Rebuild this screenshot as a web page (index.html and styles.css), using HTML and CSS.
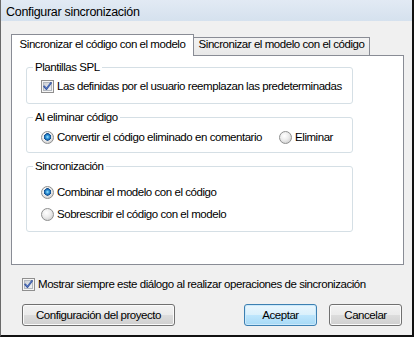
FILE: index.html
```html
<!DOCTYPE html>
<html lang="es">
<head>
<meta charset="utf-8">
<title>Configurar sincronización</title>
<link rel="stylesheet" href="styles.css">
</head>
<body>
<div class="window">
  <div class="titlebar">Configurar sincronización</div>
  <div class="body">
    <div class="tabs">
      <div class="tab tab-active">Sincronizar el código con el modelo</div>
      <div class="tab tab-inactive">Sincronizar el modelo con el código</div>
    </div>
    <div class="panel">
      <fieldset class="group">
        <legend>Plantillas SPL</legend>
        <div class="rows rows-1">
          <label class="opt">
            <svg class="cb" width="13" height="13" viewBox="0 0 13 13"><defs><linearGradient id="cbg1" x1="0" y1="0" x2="1" y2="1"><stop offset="0" stop-color="#c9cdd3"/><stop offset="1" stop-color="#f4f5f6"/></linearGradient></defs><rect x="0.5" y="0.5" width="12" height="12" fill="#f5f5f5" stroke="#8f8f8f"/><rect x="2.5" y="2.5" width="8" height="8" fill="url(#cbg1)" stroke="#b3b8bf"/><path d="M3.2 6.4 L5.4 9 L9.9 3" fill="none" stroke="#2f4f9c" stroke-width="1.9" stroke-linecap="round" stroke-linejoin="round"/><path d="M3.6 6.6 L5.4 8.5 L9.6 3.4" fill="none" stroke="#6f8fd8" stroke-width="0.7"/></svg>
            <span>Las definidas por el usuario reemplazan las predeterminadas</span>
          </label>
        </div>
      </fieldset>
      <fieldset class="group">
        <legend>Al eliminar código</legend>
        <div class="rows rows-2">
          <label class="opt"><span class="radio on"></span><span>Convertir el código eliminado en comentario</span></label>
          <label class="opt opt-right"><span class="radio"></span><span>Eliminar</span></label>
        </div>
      </fieldset>
      <fieldset class="group">
        <legend>Sincronización</legend>
        <div class="rows rows-3">
          <label class="opt"><span class="radio on"></span><span>Combinar el modelo con el código</span></label>
          <label class="opt"><span class="radio"></span><span>Sobrescribir el código con el modelo</span></label>
        </div>
      </fieldset>
    </div>
    <label class="opt footer-check">
      <svg class="cb" width="13" height="13" viewBox="0 0 13 13"><defs><linearGradient id="cbg2" x1="0" y1="0" x2="1" y2="1"><stop offset="0" stop-color="#c9cdd3"/><stop offset="1" stop-color="#f4f5f6"/></linearGradient></defs><rect x="0.5" y="0.5" width="12" height="12" fill="#f5f5f5" stroke="#8f8f8f"/><rect x="2.5" y="2.5" width="8" height="8" fill="url(#cbg2)" stroke="#b3b8bf"/><path d="M3.2 6.4 L5.4 9 L9.9 3" fill="none" stroke="#2f4f9c" stroke-width="1.9" stroke-linecap="round" stroke-linejoin="round"/><path d="M3.6 6.6 L5.4 8.5 L9.6 3.4" fill="none" stroke="#6f8fd8" stroke-width="0.7"/></svg>
      <span>Mostrar siempre este diálogo al realizar operaciones de sincronización</span>
    </label>
    <div class="buttons">
      <button class="btn btn-config">Configuración del proyecto</button>
      <button class="btn btn-default">Aceptar</button>
      <button class="btn btn-cancel">Cancelar</button>
    </div>
  </div>
</div>
</body>
</html>
```
FILE: styles.css
```css
* { box-sizing: border-box; }
html, body { margin: 0; padding: 0; }
body {
  width: 414px;
  height: 337px;
  overflow: hidden;
  font-family: "Liberation Sans", Arial, sans-serif;
  font-size: 11.5px;
  letter-spacing: -0.45px;
  color: #000;
  background: #f0f0f0;
}
.window {
  width: 414px;
  height: 337px;
  border-left: 1px solid #6a6a6a;
  border-right: 2px solid #111;
  border-bottom: 2px solid #111;
  background: #f0f0f0;
  display: flex;
  flex-direction: column;
}
.titlebar {
  height: 21px;
  padding: 5px 0 0 5px;
  line-height: 14px;
  font-size: 12.5px;
  letter-spacing: -0.3px;
  background: linear-gradient(#e2eaf4, #d5e1ee);
}
.body {
  padding: 13px 8px 0 10px;
  display: flex;
  flex-direction: column;
}
.tabs {
  display: flex;
  align-items: flex-end;
  height: 21px;
}
.tab {
  text-align: center;
  line-height: 13px;
  border: 1px solid #898c95;
  border-bottom: none;
  white-space: nowrap;
}
.tab-active {
  width: 183px;
  height: 22px;
  margin-bottom: -1px;
  padding-top: 3px;
  background: #fff;
  position: relative;
  z-index: 1;
}
.tab-inactive {
  width: 176px;
  height: 18px;
  border-left: none;
  background: linear-gradient(#f3f3f3, #e8e8e8);
}
.panel {
  width: 393px;
  height: 210px;
  border: 1px solid #898c95;
  background: #fff;
  padding: 4px 0 0 14px;
  display: flex;
  flex-direction: column;
  gap: 6px;
}
.group {
  width: 327px;
  margin: 0;
  padding: 0;
  border: 1px solid #d5dfe5;
  border-radius: 3px;
  min-width: 0;
}
.group legend {
  margin-left: 6px;
  padding: 0 2px;
  line-height: 15px;
}
.rows {
  display: flex;
  padding-left: 14px;
}
.rows-1 { padding-top: 3px; padding-bottom: 9px; }
.rows-2 { padding-top: 4px; padding-bottom: 7px; padding-right: 19px; }
.rows-3 { padding-top: 10px; padding-bottom: 9px; flex-direction: column; gap: 6px; }
.opt {
  display: flex;
  align-items: center;
  height: 16px;
  gap: 3px;
  white-space: nowrap;
}
.opt-right { margin-left: auto; }
.cb { flex: none; display: block; }
.radio {
  flex: none;
  width: 13px;
  height: 13px;
  border-radius: 50%;
  border: 1px solid #8e8f8f;
  background: radial-gradient(circle at 40% 35%, #ffffff 0, #ececec 45%, #d2d2d2 80%, #c4c4c4 100%);
}
.radio.on {
  background:
    radial-gradient(circle at 50% 45%, #a9e6ff 0, #3fa4e0 1.4px, #1d6fb8 2.6px, #134a86 3.5px, rgba(19,74,134,0) 3.9px),
    radial-gradient(circle at 40% 35%, #ffffff 0, #ececec 45%, #d2d2d2 80%, #c4c4c4 100%);
}
.footer-check {
  margin-top: 11px;
  padding-left: 11px;
}
.buttons {
  display: flex;
  margin-top: 12px;
  height: 22px;
}
.btn {
  font: inherit;
  letter-spacing: inherit;
  color: #000;
  height: 22px;
  padding: 0;
  line-height: 20px;
  border: 1px solid #707070;
  border-radius: 3px;
  background: linear-gradient(#f2f2f2 0%, #ebebeb 50%, #dddddd 50%, #cfcfcf 100%);
  box-shadow: inset 0 0 0 1px #fbfbfb;
  text-align: center;
}
.btn-config { width: 153px; margin-left: 11px; }
.btn-default {
  width: 73px;
  margin-left: auto;
  border-color: #3c7fb1;
  background: linear-gradient(#eaf6fd 0%, #d9f0fc 50%, #bee6fd 50%, #a7d9f5 100%);
  box-shadow: inset 0 0 0 1px #cbe9fb;
}
.btn-cancel { width: 73px; margin-left: 12px; margin-right: 2px; }
```
